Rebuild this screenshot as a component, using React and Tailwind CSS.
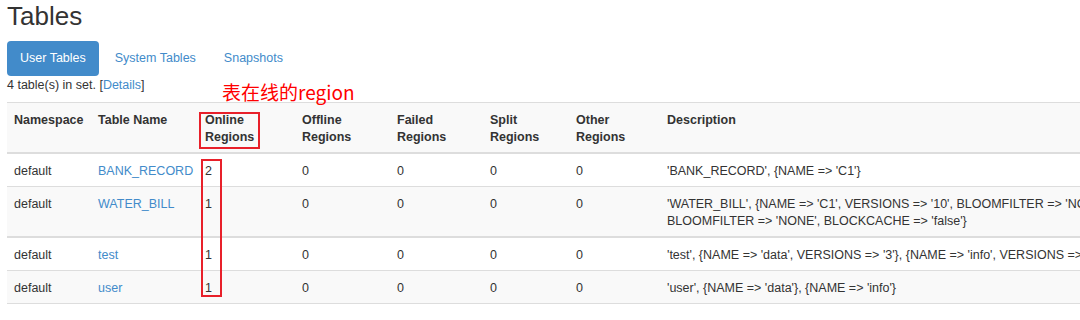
const rows = [
  { ns: 'default', name: 'BANK_RECORD', online: 2, desc: ["'BANK_RECORD', {NAME => 'C1'}"] },
  {
    ns: 'default',
    name: 'WATER_BILL',
    online: 1,
    desc: [
      "'WATER_BILL', {NAME => 'C1', VERSIONS => '10', BLOOMFILTER => 'NONE', BLOCKCACHE => 'false'}, {NAME => 'C2', VERSIONS => '10',",
      "BLOOMFILTER => 'NONE', BLOCKCACHE => 'false'}",
    ],
  },
  { ns: 'default', name: 'test', online: 1, desc: ["'test', {NAME => 'data', VERSIONS => '3'}, {NAME => 'info', VERSIONS => '3'}"] },
  { ns: 'default', name: 'user', online: 1, desc: ["'user', {NAME => 'data'}, {NAME => 'info'}"] },
]

const cols = [
  { label: ['Namespace'], w: 'w-[84px]' },
  { label: ['Table Name'], w: 'w-[107px]' },
  { label: ['Online', 'Regions'], w: 'w-[97px]' },
  { label: ['Offline', 'Regions'], w: 'w-[95px]' },
  { label: ['Failed', 'Regions'], w: 'w-[93px]' },
  { label: ['Split', 'Regions'], w: 'w-[86px]' },
  { label: ['Other', 'Regions'], w: 'w-[91px]' },
  { label: ['Description'], w: 'w-[800px]' },
]

export default function App() {
  return (
    <div
      className="relative w-[1080px] h-[320px] overflow-hidden bg-white text-[#333] text-[12.5px] leading-[17px]"
      style={{ fontFamily: '"Liberation Sans", Arial, sans-serif' }}
    >
      <div className="px-[7px]">
        {/* Title */}
        <h1 className="pt-[2px] text-[26px] leading-[29px] font-normal text-[#333]">Tables</h1>

        {/* Tabs */}
        <div className="mt-[10px] flex items-center">
          <span className="px-[13px] py-[9px] rounded-[4px] bg-[#428bca] text-white">User Tables</span>
          <span className="ml-[2px] px-[14px] py-[9px] text-[#428bca]">System Tables</span>
          <span className="px-[14px] py-[9px] text-[#428bca]">Snapshots</span>
        </div>

        <div className="mt-[1px]">
          4 table(s) in set. [<span className="text-[#428bca]">Details</span>]
        </div>

        {/* Table */}
        <table className="mt-[8px] table-fixed border-collapse w-[1453px] border-t border-[#ddd]">
          <thead>
            <tr className="bg-[#f9f9f9] border-b-2 border-[#ddd]">
              {cols.map((c) => (
                <th key={c.label.join()} className={`${c.w} px-[7px] pt-[9px] pb-[6px] text-left align-top font-bold`}>
                  {c.label.map((l, i) => (
                    <div key={i}>{l}</div>
                  ))}
                  {c.label.length === 1 && <div>&nbsp;</div>}
                </th>
              ))}
            </tr>
          </thead>
          <tbody>
            {rows.map((r, i) => (
              <tr
                key={r.name}
                className={`${i % 2 ? 'bg-[#f9f9f9]' : 'bg-white'} ${i === 1 ? 'border-b-2' : 'border-b'} border-[#ddd]`}
              >
                <td className="px-[7px] pt-[8.5px] pb-[6.5px] align-top">{r.ns}</td>
                <td className="px-[7px] pt-[8.5px] pb-[6.5px] align-top text-[#428bca]">{r.name}</td>
                <td className="px-[7px] pt-[8.5px] pb-[6.5px] align-top">{r.online}</td>
                <td className="px-[7px] pt-[8.5px] pb-[6.5px] align-top">0</td>
                <td className="px-[7px] pt-[8.5px] pb-[6.5px] align-top">0</td>
                <td className="px-[7px] pt-[8.5px] pb-[6.5px] align-top">0</td>
                <td className="px-[7px] pt-[8.5px] pb-[6.5px] align-top">0</td>
                <td className="px-[7px] pt-[8.5px] pb-[6.5px] align-top whitespace-nowrap">
                  {r.desc.map((d, j) => (
                    <div key={j}>{d}</div>
                  ))}
                </td>
              </tr>
            ))}
          </tbody>
        </table>
      </div>

      {/* Annotations */}
      <div
        className="absolute left-[222px] top-[80px] text-[19px] leading-[23px] text-[#f00]"
        style={{ fontFamily: '"Noto Sans CJK SC", "Noto Sans", sans-serif' }}
      >
        表在线的region
      </div>
      <div className="absolute left-[199px] top-[112px] w-[61px] h-[37px] border-2 border-[#e8202a]" />
      <div className="absolute left-[201px] top-[159px] w-[21px] h-[138px] border-2 border-[#e8202a]" />
    </div>
  )
}
